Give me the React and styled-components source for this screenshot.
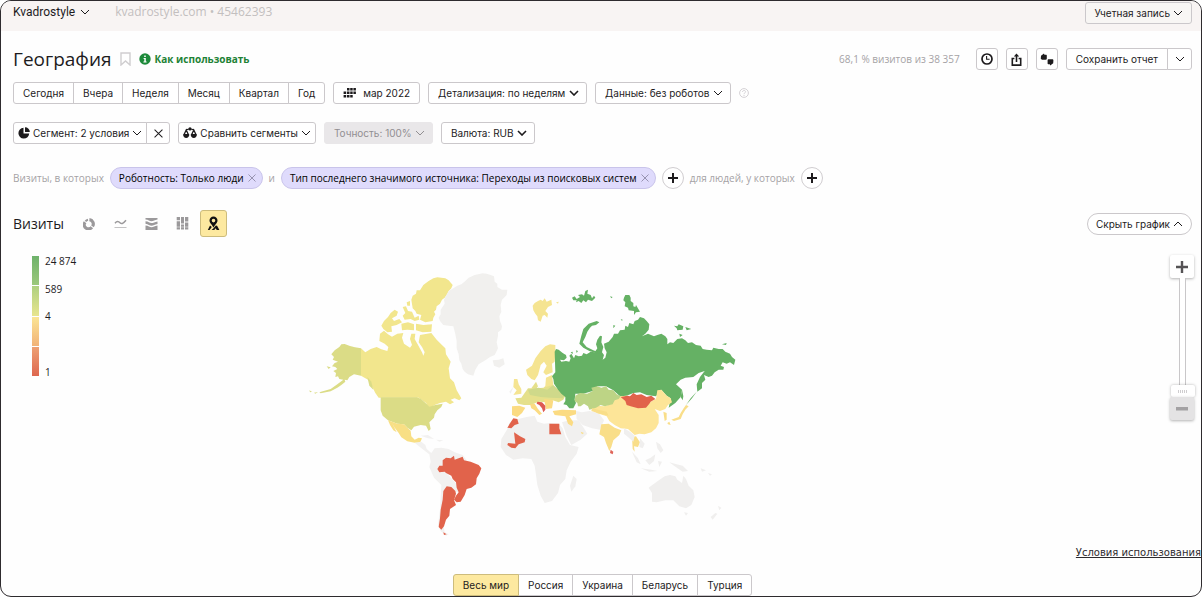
import React, { useState } from "react";
import styled, { createGlobalStyle, css } from "styled-components";

const periods = ["Сегодня", "Вчера", "Неделя", "Месяц", "Квартал", "Год"];

const regions = ["Весь мир", "Россия", "Украина", "Беларусь", "Турция"];

const GlobalStyle = createGlobalStyle`
  * {
    box-sizing: border-box;
  }

  body {
    margin: 0;
    background: #fff;
  }

  button,
  select,
  input {
    margin: 0;
    font: inherit;
    color: inherit;
  }

  svg {
    flex-shrink: 0;
  }
`;

const Page = styled.div`
  min-height: 100vh;
  border: 1px solid #2e2b2e;
  border-radius: 11px;
  overflow: hidden;
  background: #fefefe;
  color: #1d1b1d;
  font-family: Inter, Arial, sans-serif;
  font-size: 10px;
  line-height: 14px;
  white-space: nowrap;
`;

const Header = styled.header`
  display: flex;
  align-items: flex-start;
  height: 30px;
  padding: 1px 9px 0 12px;
  background: #f8f4f3;
`;

const controlBox = css`
  height: 22px;
  border: 1px solid #cbc8cb;
  border-radius: 3px;
  background: #fff;
`;

const CounterButton = styled.button`
  display: flex;
  align-items: center;
  gap: 5px;
  height: 20px;
  padding: 0;
  border: 0;
  background: none;
  font-family: Roboto, sans-serif;
  font-size: 12px;
`;

const CounterInfo = styled.span`
  margin-left: 25px;
  color: #c3bfbf;
  font-family: "Open Sans", sans-serif;
  font-size: 12px;
  line-height: 20px;
`;

const Button = styled.button`
  ${controlBox}
  display: flex;
  align-items: center;
  justify-content: center;
  gap: ${(props) => props.$gap || 3}px;
  padding: 0 ${(props) => (props.$tight ? 4 : 9)}px;
  ${(props) => props.$width && `width: ${props.$width}px; padding: 0;`}
  ${(props) => props.$round && "border-radius: 11px;"}
  ${(props) => props.$push && "margin-left: auto; padding: 0 8px;"}
`;

const AccountButton = styled(Button)`
  background: #f8f6f4;
`;

const Main = styled.main`
  padding: 16px 9px 0 12px;
`;

const TitleRow = styled.div`
  display: flex;
  align-items: center;
  height: 24px;
`;

const Title = styled.h1`
  margin: 0 8px 0 0;
  font-family: "Open Sans", sans-serif;
  font-size: 19px;
  font-weight: 400;
  line-height: 24px;
`;

const HelpLink = styled.a`
  display: flex;
  align-items: center;
  gap: 4px;
  margin-left: 8px;
  color: #1d8235;
  font-family: "Open Sans", sans-serif;
  font-weight: 700;
  text-decoration: none;
`;

const Tools = styled.div`
  display: flex;
  align-items: center;
  gap: 8px;
  margin-left: auto;
`;

const VisitShare = styled.span`
  margin-right: 8px;
  color: #a5a2a5;
  font-family: "Open Sans", sans-serif;
`;

const Row = styled.div`
  display: flex;
  align-items: center;
  gap: ${(props) => props.$gap || 8}px;
  margin-top: ${(props) => props.$top}px;
`;

const Group = styled.div`
  display: flex;

  button + button {
    margin-left: -1px;
  }

  button:not(:first-child) {
    border-top-left-radius: 0;
    border-bottom-left-radius: 0;
  }

  button:not(:last-child) {
    border-top-right-radius: 0;
    border-bottom-right-radius: 0;
  }
`;

const SelectBox = styled.label`
  ${controlBox}
  display: flex;
  align-items: center;
  gap: 3px;
  padding: 0 7px 0 9px;

  select {
    appearance: none;
    padding: 0;
    border: 0;
    background: none;
    opacity: 1;
  }

  ${(props) =>
    props.$disabled &&
    css`
      border-color: #e9e7e9;
      background: #e9e7e9;
      color: #918e91;
    `}
`;

const Muted = styled.span`
  color: #a5a2a5;
  font-family: "Open Sans", sans-serif;
`;

const Condition = styled.div`
  display: flex;
  align-items: center;
  gap: 4px;
  height: 22px;
  padding: 0 6px 0 8px;
  border: 1px solid #c9c4ea;
  border-radius: 11px;
  background: #dfdbfc;
  color: #000;
  font-family: "Open Sans", sans-serif;

  button {
    display: flex;
    padding: 0;
    border: 0;
    background: none;
    color: #8f8aa8;
  }
`;

const RoundButton = styled.button`
  display: flex;
  align-items: center;
  justify-content: center;
  width: 22px;
  height: 22px;
  padding: 0;
  border: 1px solid #d0cdd0;
  border-radius: 50%;
  background: #fff;
`;

const ChartTitle = styled.h2`
  margin: 0 8px 0 0;
  font-family: "Open Sans", sans-serif;
  font-size: 14px;
  font-weight: 500;
  line-height: 20px;
`;

const ChartType = styled.button`
  display: flex;
  align-items: center;
  justify-content: center;
  width: 27px;
  height: 27px;
  padding: 0;
  border: 1px solid ${(props) => (props.$active ? "#cdbc7c" : "transparent")};
  border-radius: 3px;
  background: ${(props) => (props.$active ? "#fde9a0" : "none")};
  color: ${(props) => (props.$active ? "#111" : "#9b999b")};
`;

const MapArea = styled.section`
  display: grid;
  grid-template-columns: 25% 1fr auto;
  align-items: start;
  margin: 18px -2px 0 0;
`;

const Legend = styled.div`
  display: flex;
  gap: 6px;
  height: 120px;
  margin: 1px 0 0 19px;
`;

const Scale = styled.div`
  display: grid;
  grid-template-rows: repeat(4, 1fr);
  gap: 1px;
  width: 7px;
`;

const ScaleStep = styled.span`
  background: linear-gradient(${(props) => props.$from}, ${(props) => props.$to});
`;

const ScaleLabels = styled.div`
  display: grid;
  grid-template-rows: 28px 27px 56px 14px;
  font-family: "Open Sans", sans-serif;
  line-height: 10px;
`;

const MapSvg = styled.svg`
  width: 450px;
  height: 280px;
  margin: 10px 0 1px -8px;
`;

const Zoom = styled.div`
  display: flex;
  flex-direction: column;
  align-items: center;
  width: 24px;
`;

const ZoomButton = styled.button`
  display: flex;
  align-items: center;
  justify-content: center;
  width: 24px;
  height: 23px;
  padding: 0;
  border: 0;
  border-radius: 2px;
  background: ${(props) => (props.disabled ? "#e4e3e4" : "#fff")};
  color: ${(props) => (props.disabled ? "#a3a1a3" : "#555355")};
  box-shadow: 0 1px 3px rgba(0, 0, 0, 0.3);
`;

const ZoomSlider = styled.input`
  appearance: none;
  writing-mode: vertical-lr;
  direction: rtl;
  width: 24px;
  height: 119px;
  background: none;

  &::-webkit-slider-runnable-track {
    width: 7px;
    height: 119px;
    margin: 0 auto;
    border: 1px solid #c9c7c9;
    border-width: 0 1px;
    background: #fff;
  }

  &::-webkit-slider-thumb {
    appearance: none;
    width: 24px;
    height: 12px;
    margin-left: -9px;
    border-radius: 2px;
    background: repeating-linear-gradient(90deg, #cfcdcf 0 1px, transparent 1px 2px) center / 9px 3px no-repeat, #fff;
    box-shadow: 0 0 3px rgba(0, 0, 0, 0.3);
  }
`;

const Terms = styled.a`
  display: block;
  width: fit-content;
  margin: 0 -9px 0 auto;
  color: #2d2a2d;
  font-family: "DejaVu Sans", Verdana, sans-serif;
  line-height: 14px;
  text-decoration: underline;
`;

const RegionRow = styled.nav`
  display: flex;
  justify-content: center;
  margin-top: 14px;
`;

const RegionButton = styled(Button)`
  ${(props) => props.$active && "position: relative; border-color: #cdbc7c; background: #fde9a0;"}
`;

const Chevron = ({ up, bold }) => (
  <svg width="10" height="6" viewBox="0 0 10 6" fill="none" stroke="currentColor" strokeWidth={bold ? 1.6 : 1}>
    <path d={up ? "M1 5 5 1 9 5" : "M1 1 5 5 9 1"} />
  </svg>
);

const Cross = ({ size = 8 }) => (
  <svg width={size} height={size} viewBox="0 0 8 8" stroke="currentColor" strokeWidth="0.9">
    <path d="M.5.5l7 7M7.5.5l-7 7" />
  </svg>
);

const Plus = ({ size = 10 }) => (
  <svg width={size} height={size} viewBox="0 0 10 10" stroke="currentColor" strokeWidth="2">
    <path d="M5 0v10M0 5h10" />
  </svg>
);

const BookmarkIcon = () => (
  <svg width="11" height="14" viewBox="0 0 11 14" fill="none" stroke="#cfcdcf" strokeWidth="1.4">
    <path d="M1 1h9v12L5.500 9 1 13z" />
  </svg>
);

const InfoIcon = () => (
  <svg width="12" height="12" viewBox="0 0 12 12">
    <circle cx="6" cy="6" r="5.700" fill="#1d8a3a" />
    <path d="M5.200 2.500h1.600v1.500H5.200zM4.600 5h2.200v3.400h.8v1H4.400v-1h.9V6h-.7z" fill="#fff" />
  </svg>
);

const ClockIcon = () => (
  <svg width="12" height="12" viewBox="0 0 12 12" fill="none" stroke="currentColor">
    <circle cx="6" cy="6" r="5" strokeWidth="1.700" />
    <path d="M5.600 3v3.300h3" strokeWidth="1.100" />
  </svg>
);

const ShareIcon = () => (
  <svg width="11" height="13" viewBox="0 0 11 13" fill="none" stroke="currentColor" strokeWidth="1.600">
    <path d="M3.400 5.500H1.300v6.600h8.400V5.500H7.600M5.500 9V2" />
    <path d="M2.800 3.600 5.500.4l2.700 3.200z" fill="currentColor" stroke="none" />
  </svg>
);

const CommentsIcon = () => (
  <svg width="14" height="13" viewBox="0 0 14 13" fill="currentColor">
    <path d="M1 2.800 4 .4l.4 1.400h1.400c.8 0 1 .4 1 1v2.800c0 .8-.4 1.200-1.200 1.200H2C1.200 6.800.8 6.400.8 5.600z" />
    <path d="M13.200 10.200 10.200 12.600 9.800 11.200H8.600c-.8 0-1-.4-1-1V7.400c0-.8.4-1.200 1.200-1.200h3.400c.8 0 1.200.4 1.200 1.200z" />
  </svg>
);

const CalendarIcon = () => (
  <svg width="13" height="10" viewBox="0 0 13 10" fill="currentColor">
    <path d="M4 0h2.500v2.500H4zM7.200 0h2.500v2.500H7.200zM10.400 0h2.500v2.500h-2.500zM.6 3.500h2.600V6H.6zM4 3.500h2.500V6H4zM7.200 3.500h2.500V6H7.200zM10.400 3.500h2.500V6h-2.500zM.6 7h2.600v2.500H.6zM4 7h2.500v2.500H4zM7.200 7h2.500v2.500H7.200z" />
  </svg>
);

const PieIcon = () => (
  <svg width="12" height="12" viewBox="0 0 12 12" fill="currentColor">
    <path d="M5.500.8v5.700h5.700A5.400 5.400 0 1 1 5.500.8z" />
    <path d="M7 .2a4.800 4.800 0 0 1 4.800 4.900H7z" />
  </svg>
);

const ScalesIcon = () => (
  <svg width="14" height="12" viewBox="0 0 14 12" fill="none" stroke="currentColor" strokeWidth="1.300">
    <path d="M3.200 3 1 7.600h4.400zM10.800 3 8.600 7.600H13zM3.200 3l2.600-1M10.800 3 8.200 2" />
    <circle cx="7" cy="1.900" r="1.600" fill="currentColor" stroke="none" />
    <path d="M.2 7.400h6c0 2-1.200 3.600-3 3.600s-3-1.600-3-3.600zM7.800 7.400h6c0 2-1.200 3.600-3 3.600s-3-1.600-3-3.600z" fill="currentColor" stroke="none" />
  </svg>
);

const HintIcon = () => (
  <svg width="10" height="10" viewBox="0 0 10 10" fill="none" stroke="#cfccd0" strokeWidth="0.900">
    <circle cx="5" cy="5" r="4.400" />
    <path d="M3.500 4c0-2 3-2 3-.2C6.500 5 5 4.800 5 6.200M5 7v1" />
  </svg>
);

const DonutIcon = () => (
  <svg width="12" height="12" viewBox="0 0 12 12" fill="none" stroke="currentColor" strokeWidth="3.200">
    <path d="M6.400 1.700a4.200 4.200 0 0 1 3.100 6.600" />
    <path d="M8.800 9.300A4.200 4.200 0 0 1 2.100 4.200" />
    <path d="M2.500 3.400a4.200 4.200 0 0 1 2.500-1.600" strokeWidth="2" />
  </svg>
);

const LinesIcon = () => (
  <svg width="13" height="11" viewBox="0 0 13 11" fill="none" stroke="currentColor">
    <path d="M1 5.200c2-2.400 3.600-1.800 5-.4s2.800 1.200 6-2.600" strokeWidth="1.500" />
    <path d="M.5 9.500h12" strokeWidth="1" opacity=".6" />
  </svg>
);

const AreasIcon = () => (
  <svg width="13" height="12" viewBox="0 0 13 12" fill="currentColor">
    <path d="M.5 0h12v1.400c-3 .4-4 1.800-6 1.800S3.500 1.800.5 1.600z" />
    <path d="M.5 3.200c3 .2 4 1.800 6 1.800s3-1.200 6-1.600v2.700c-3 .4-4 1.600-6 1.600S3.500 6.100.5 5.700z" />
    <path d="M.5 7.400c3 .2 4 1.800 6 1.800s3-1.200 6-1.600V12H.5z" />
  </svg>
);

const ColumnsIcon = () => (
  <svg width="13" height="13" viewBox="0 0 13 13" fill="currentColor">
    <path d="M.7 0h3.300v3.200H.7zM5 0h3v6.400H5zM9 0h3.300v4.500H9zM.7 4.200h3.300v5.500H.7zM5 7.400h3v2.300H5zM9 5.500h3.300v4.200H9zM.7 10.200h3.300v2.300H.7zM5 10.200h3v2.300H5zM9 10.200h3.300v2.300H9z" />
  </svg>
);

const PinMapIcon = () => (
  <svg width="13" height="15" viewBox="0 0 13 15" fill="currentColor">
    <path
      fillRule="evenodd"
      d="M6.500.5a4 4 0 0 1 4 4.100c0 2.200-1.800 3.200-4 6.900-2.200-3.700-4-4.700-4-6.900a4 4 0 0 1 4-4.100zm0 2.300a1.800 1.800 0 1 0 0 3.600 1.800 1.800 0 0 0 0-3.600z"
    />
    <path d="M3 9.500 4.800 11 2.600 14H.8zM6.300 12.500 8.800 9.500l1.300.2L12.400 14H9.700l-1-1.800L7.200 14H4.500z" />
  </svg>
);

const charts = [
  { id: "pie", label: "Круговая диаграмма", icon: <DonutIcon /> },
  { id: "lines", label: "Линии", icon: <LinesIcon /> },
  { id: "areas", label: "Области", icon: <AreasIcon /> },
  { id: "columns", label: "Колонки", icon: <ColumnsIcon /> },
  { id: "map", label: "Карта", icon: <PinMapIcon /> },
];

const WorldMap = () => (
  <MapSvg viewBox="0 0 1350 840" role="img" aria-label="Карта визитов">
    {/* North America and Greenland */}
    <g fill="#f2e68d">
      <path d="M183 250 196 262 212 252 230 246 244 253 262 258 265 246 254 236 238 228 240 206 252 197 264 208 276 215 292 206 310 204 306 218 312 236 330 248 336 240 330 222 334 206 346 206 344 222 352 236 366 262 370 272 374 262 366 246 356 232 360 210 394 204 410 224 422 236 436 250 438 268 452 290 446 310 450 340 462 352 470 376 484 400 478 406 464 400 452 404 462 412 450 418 438 410 420 414 404 420 388 430 378 414 356 398 236 398 226 384 214 360 204 344 183 332Z" />
      <path d="M400 40 412 37 424 38 436 40 446 46 458 60 454 70 446 78 440 90 434 98 426 104 420 116 410 124 408 134 402 140 406 148 400 158 398 168 376 172 360 164 364 150 350 146 346 138 338 130 334 104 338 92 348 86 350 76 360 76 370 60 386 48Z" />
      <path d="M348 176 370 180 396 178 394 200 368 202 348 196Z" />
      <path d="M308 126 318 124 324 138 336 140 344 158 356 152 358 164 344 168 332 162 314 164 308 152 316 144Z" />
      <path d="M284 134 294 140 290 152 276 160 282 168 298 162 306 172 290 180 274 184 276 200 262 202 250 192 244 182 252 168 264 156 272 144Z" />
      <path d="M304 176 324 172 342 178 342 196 322 194 306 196Z" />
      <path d="M320 112 330 108 330 122 322 122Z" />
    </g>
    <g fill="#dbdc86">
      <path d="M134 237 150 243 165 247 183 250V332L162 328 148 336 142 346 134 344 136 350 124 360 112 368 92 379 62 385 58 382 92 372 112 358 130 344 118 342 114 334 106 336 108 324 100 318 112 312 106 306 96 304 104 294 114 290 98 284 102 276 94 268 104 256 118 246 124 238Z" />
      <path d="M80 304 92 307 86 312ZM28 376 36 380 30 382ZM42 383 54 381 46 386Z" />
      <path d="M202 336 214 350 220 374 208 362Z" />
      <path d="M242 397H350L362 401 380 417 388 425 406 420 428 416 424 426 412 436 404 448 402 458 388 472 392 492 386 498 378 482 362 480 342 485 334 496 322 488 312 478 292 476 264 466 248 452 242 436Z" />
    </g>
    <path
      fill="#f8df85"
      d="M264 466 292 476 312 478 322 488 332 497 334 514 344 524 356 518 366 520 360 533 344 533 322 529 304 517 296 504 284 488 276 474 290 502 280 496 270 480Z"
    />
    <path
      fill="#f1f0ee"
      d="M548 25 560 26 572 30 582 34 584 50 592 56 592 66 606 74 622 74 620 90 606 104 602 120 604 140 598 154 600 168 606 184 604 194 594 202 594 212 590 232 594 250 584 270 570 276 556 286 536 298 526 314 520 332 504 328 494 320 488 312 484 296 478 286 476 268 470 250 470 228 466 208 460 184 446 182 430 180 420 168 416 158 422 148 422 134 434 116 432 104 438 92 446 78 460 70 472 62 484 58 496 48 506 38 524 30ZM578 286 596 284 610 280 614 298 598 308 582 302Z"
    />
    {/* South America */}
    <g fill="#f2f1f0">
      <path d="M344 533 364 530 376 540 380 552 394 564 404 550 424 548 446 552 464 562 488 570 500 586 470 600 434 580 436 620 458 644 478 666 480 684 440 670 436 700 432 740 430 780 434 802 446 808 438 812 422 798 414 780 420 734 422 698 424 660 402 638 388 606 392 590 388 568 372 556Z" />
      <path d="M362 512 384 510 402 522 384 520ZM408 524 430 526 418 530Z" />
    </g>
    <g fill="#e1634b">
      <path d="M428 586 438 578 452 580 462 572 464 584 480 578 488 575 492 586 512 590 536 600 544 610 538 626 530 640 528 658 514 668 500 672 494 690 482 710 470 712 462 704 468 692 476 682 470 668 468 652 458 642 454 632 438 624 434 620 418 622 412 612 418 602 428 602Z" />
      <path d="M440 664 454 666 466 678 468 686 462 706 468 720 450 732 448 752 438 764 432 784 424 794 416 786 420 760 422 734 428 704 430 678ZM430 802 440 808 432 810Z" />
    </g>
    {/* Africa and Middle East */}
    <g fill="#f1f0ef">
      <path d="M654 462 680 456 704 452 712 470 732 476 750 474 776 476 788 490 796 516 810 540 836 546 830 566 812 590 800 616 796 642 780 660 774 684 756 708 734 714 722 692 712 660 708 630 704 602 694 582 668 580 640 584 618 570 602 546 604 522 622 492 628 474Z" />
      <path d="M820 632 830 642 826 664 814 680 810 662Z" />
      <path d="M786 472 806 466 836 466 852 490 862 506 842 524 814 540 800 512Z" />
      <path d="M828 438 846 442 868 438 896 444 912 466 900 494 876 490 848 480 830 462Z" />
      <path d="M640 366 632 386 628 380Z" />
    </g>
    <g fill="#e1634b">
      <path d="M640 460 652 462 656 476 644 480 634 490 622 488 632 472Z" />
      <path d="M642 502 660 514 676 522 674 532 656 538 646 550 634 548 622 540 624 534 646 536Z" />
      <path d="M748 476 778 476 778 490 784 508 748 508Z" />
    </g>
    {/* Europe */}
    <g fill="#f5e491">
      <path d="M704 114 714 108 722 104 728 108 734 100 740 110 754 104 756 120 744 126 736 138 744 146 742 158 734 150 728 152 722 170 714 166 712 154 706 146 700 136 698 122ZM768 112 776 110 774 116Z" />
      <path d="M750 238 766 240 766 262 764 290 756 296 758 322 738 330 730 322 740 302 732 290 722 300 714 330 704 346 694 342 682 330 678 314 696 302 706 280 722 258 736 244Z" />
      <path d="M642 342 652 342 656 358 664 372 664 386 640 390 650 376 640 366Z" />
      <path d="M738 338 756 330 760 360 744 370 724 378 736 362Z" />
    </g>
    <g fill="#e5e08b">
      <path d="M684 370 710 370 730 368 758 360 778 376 796 392 790 404 776 412 758 406 740 412 720 410 706 414 694 420 672 420 654 416 646 400 664 398 674 384Z" />
      <path d="M694 370 708 350 714 364 706 376Z" />
    </g>
    <path fill="#cfd98a" d="M684 374 716 368 742 374 760 360 774 376 796 390 788 400 752 398 722 396 690 390Z" />
    <g fill="#fbdb82">
      <path d="M636 424 658 422 676 428 666 444 652 456 636 450Z" />
      <path d="M690 418 704 416 714 432 726 446 718 450 704 436 694 430Z" />
      <path d="M732 402 760 406 756 430 738 432Z" />
      <path d="M758 438 786 434 828 436 828 448 808 454 820 472 816 484 804 476 796 454 764 450Z" />
    </g>
    <path fill="#de5a52" d="M712 410 726 412 736 422 736 434 730 442 726 430 718 420 710 416Z" />
    {/* Asia */}
    <path
      fill="#65b164"
      d="M764 260 768 252 776 254 788 264 798 270 800 278 792 286 780 284 784 290 798 288 808 290 812 280 808 272 814 266 822 280 826 270 836 274 846 272 850 264 860 268 872 260 884 262 892 250 888 238 892 224 900 212 906 214 904 232 910 246 906 262 912 270 908 284 916 278 920 262 914 250 912 236 926 230 938 216 942 206 954 206 960 196 974 194 976 182 984 186 988 174 1000 178 1004 168 1014 164 1020 156 1032 160 1040 168 1048 178 1046 194 1036 206 1026 214 1044 206 1062 214 1072 210 1084 206 1096 214 1102 222 1102 238 1110 232 1120 234 1132 222 1146 220 1156 226 1164 234 1176 232 1188 240 1202 242 1208 252 1220 254 1236 256 1240 248 1256 252 1268 252 1276 260 1290 266 1296 276 1306 284 1302 300 1290 292 1280 296 1268 292 1262 302 1272 306 1270 314 1256 314 1244 322 1236 332 1226 336 1212 330 1216 344 1206 354 1206 370 1192 380 1190 358 1200 336 1214 318 1196 324 1180 336 1156 338 1142 344 1128 358 1146 374 1142 396 1126 414 1106 428 1112 400 1100 392 1084 374 1068 394 1040 390 1020 382 1000 384 980 392 960 394 940 376 918 364 892 364 878 378 850 386 826 386 824 404 828 414 820 430 808 430 800 420 790 418 796 408 796 396 784 386 774 374 762 356 760 342 756 334 766 322Z"
    />
    <g fill="#65b164">
      <path d="M890 168 898 172 888 180 876 182 870 188 862 200 856 216 848 232 860 246 880 256 900 264 896 266 868 258 850 248 838 236 844 212 850 192 866 176Z" />
      <path d="M816 98 824 94 830 102 840 96 834 90 846 88 852 92 856 78 864 74 862 86 872 90 876 100 882 92 886 98 876 108 864 104 858 112 850 106 844 114 836 108 828 112 830 106 820 106Z" />
      <path d="M976 90 988 90 992 98 992 108 1000 114 1000 124 1006 126 1008 120 1020 140 1008 142 1002 150 1002 138 986 136 984 128 974 124 976 112 970 106 972 98Z" />
      <path d="M1122 182 1132 184 1136 178 1150 184 1148 194 1132 196 1130 190ZM1156 186 1174 192 1160 196ZM1138 206 1148 210 1140 216ZM1266 238 1280 234 1278 240ZM940 180 946 182 940 190ZM930 94 938 96 934 100ZM962 162 968 164 966 168Z" />
      <path d="M1146 374 1150 394 1148 406 1142 396ZM1190 380 1176 400 1158 420 1172 400Z" />
      <path d="M812 262 818 260 818 268ZM828 256 834 258 830 264Z" />
    </g>
    <path
      fill="#fde598"
      d="M960 394 982 392 990 404 1010 416 1040 420 1056 408 1068 402 1072 376 1084 374 1100 392 1112 400 1116 412 1104 420 1096 432 1080 438 1064 432 1076 450 1076 474 1068 490 1054 502 1034 508 1018 506 1004 510 984 492 962 490 944 480 928 468 920 454 890 444 876 430 884 422 914 424 936 416 944 402Z"
    />
    <path
      fill="#bdd485"
      d="M826 392 840 384 862 386 878 378 874 368 892 364 904 368 918 364 926 374 940 376 950 388 962 394 956 402 944 406 938 418 914 424 902 420 888 428 868 434 864 424 852 416 842 424 834 424 832 414 824 408Z"
    />
    <path fill="#e1634b" d="M962 396 982 392 990 394 1000 384 1010 390 1024 388 1040 396 1054 392 1066 402 1052 410 1048 416 1038 428 1014 430 992 424 980 420 976 408Z" />
    <g fill="#f9de89">
      <path d="M904 478 926 476 944 488 964 496 958 510 940 526 934 546 928 558 918 534 912 516 898 508Z" />
      <path d="M1090 440 1100 444 1100 464 1094 468ZM1102 474 1108 470 1112 480 1104 478ZM1114 464 1136 456 1142 444 1152 428 1158 420 1166 424 1156 434 1148 448 1142 462 1122 468Z" />
      <path d="M996 516 1008 514 1020 532 1014 546 1002 544 1004 560 998 552Z" />
      <path d="M876 430 920 440 926 452 900 446 874 438ZM842 500 852 504 846 508Z" />
    </g>
    <path fill="#df6458" d="M932 554 940 560 938 568 930 564Z" />
    {/* South-East Asia and Oceania */}
    <g fill="#f0efee">
      <path d="M1110 630 1126 634 1132 644 1146 654 1150 632 1158 642 1166 662 1180 676 1184 696 1174 720 1158 730 1138 724 1120 706 1096 706 1070 712 1056 710 1056 684 1046 668 1062 656 1082 642 1094 634Z" />
      <path d="M1108 592 1130 598 1148 602 1164 618 1148 620 1124 604ZM1152 742 1164 744 1158 752ZM1254 722 1264 728 1258 736ZM1232 756 1246 744 1252 746 1238 764Z" />
      <path d="M972 490 990 500 1004 512 1000 530 988 520 972 506Z" />
      <path d="M996 560 1014 580 1022 598 1010 592ZM1022 610 1054 614 1072 618 1048 620ZM1036 586 1052 578 1066 568 1062 588 1048 600ZM1068 530 1080 538 1090 556 1082 564 1072 550ZM1074 588 1086 590 1078 606ZM1202 610 1218 616 1206 620ZM1224 624 1236 628 1230 632Z" />
      <path d="M1020 520 1034 536 1028 550 1018 546Z" />
    </g>
  </MapSvg>
);

const Dropdown = ({ label, value, bold, disabled }) => (
  <SelectBox $disabled={disabled}>
    <select aria-label={label} disabled={disabled} defaultValue={value}>
      <option value={value}>{`${label}: ${value}`}</option>
    </select>
    <Chevron bold={bold} />
  </SelectBox>
);

const App = () => {
  const [chart, setChart] = useState("map");
  const [region, setRegion] = useState(regions[0]);
  const [zoom, setZoom] = useState(0);

  return (
    <>
      <GlobalStyle />
      <Page>
        <Header>
          <CounterButton>
            Kvadrostyle
            <Chevron />
          </CounterButton>
          <CounterInfo>kvadrostyle.com • 45462393</CounterInfo>
          <AccountButton $push>
            Учетная запись
            <Chevron />
          </AccountButton>
        </Header>
        <Main>
          <TitleRow>
            <Title>География</Title>
            <BookmarkIcon />
            <HelpLink href="#help">
              <InfoIcon />
              Как использовать
            </HelpLink>
            <Tools>
              <VisitShare>68,1 % визитов из 38 357</VisitShare>
              <Button $width={22} aria-label="История">
                <ClockIcon />
              </Button>
              <Button $width={22} aria-label="Экспорт">
                <ShareIcon />
              </Button>
              <Button $width={22} aria-label="Комментарии">
                <CommentsIcon />
              </Button>
              <Group>
                <Button>Сохранить отчет</Button>
                <Button $width={25} aria-label="Ещё">
                  <Chevron />
                </Button>
              </Group>
            </Tools>
          </TitleRow>

          <Row $top={11}>
            <Group>
              {periods.map((period) => (
                <Button key={period}>{period}</Button>
              ))}
            </Group>
            <Button $gap={7}>
              <CalendarIcon />
              мар 2022
            </Button>
            <Dropdown label="Детализация" value="по неделям" bold />
            <Dropdown label="Данные" value="без роботов" />
            <HintIcon />
          </Row>

          <Row $top={18}>
            <Group>
              <Button $tight>
                <PieIcon />
                Сегмент: 2 условия
                <Chevron />
              </Button>
              <Button $width={24} aria-label="Сбросить сегмент">
                <Cross size={9} />
              </Button>
            </Group>
            <Button $tight>
              <ScalesIcon />
              Сравнить сегменты
              <Chevron />
            </Button>
            <Dropdown label="Точность" value="100%" disabled />
            <Dropdown label="Валюта" value="RUB" bold />
          </Row>

          <Row $top={23} $gap={6}>
            <Muted>Визиты, в которых</Muted>
            <Condition>
              Роботность: Только люди
              <button aria-label="Удалить">
                <Cross />
              </button>
            </Condition>
            <Muted>и</Muted>
            <Condition>
              Тип последнего значимого источника: Переходы из поисковых систем
              <button aria-label="Удалить">
                <Cross />
              </button>
            </Condition>
            <RoundButton aria-label="Добавить условие">
              <Plus />
            </RoundButton>
            <Muted>для людей, у которых</Muted>
            <RoundButton aria-label="Добавить условие для людей">
              <Plus />
            </RoundButton>
          </Row>

          <Row $top={21} $gap={4}>
            <ChartTitle>Визиты</ChartTitle>
            {charts.map((item) => (
              <ChartType
                key={item.id}
                aria-label={item.label}
                $active={item.id === chart}
                onClick={() => setChart(item.id)}
              >
                {item.icon}
              </ChartType>
            ))}
            <Button $round $push>
              Скрыть график
              <Chevron up />
            </Button>
          </Row>

          <MapArea>
            <Legend>
              <Scale>
                <ScaleStep $from="#6fb26b" $to="#9bc87b" />
                <ScaleStep $from="#aed080" $to="#e8e58d" />
                <ScaleStep $from="#fbe594" $to="#f1b277" />
                <ScaleStep $from="#eda073" $to="#de674f" />
              </Scale>
              <ScaleLabels>
                <span>24 874</span>
                <span>589</span>
                <span>4</span>
                <span>1</span>
              </ScaleLabels>
            </Legend>
            <WorldMap />
            <Zoom>
              <ZoomButton aria-label="Приблизить" onClick={() => setZoom(Math.min(zoom + 1, 10))}>
                <Plus size={12} />
              </ZoomButton>
              <ZoomSlider
                type="range"
                aria-label="Масштаб"
                min="0"
                max="10"
                value={zoom}
                onChange={(e) => setZoom(Number(e.target.value))}
              />
              <ZoomButton aria-label="Отдалить" disabled={zoom === 0} onClick={() => setZoom(zoom - 1)}>
                <svg width="12" height="4" viewBox="0 0 12 4" fill="currentColor">
                  <path d="M0 0h12v3.500H0z" />
                </svg>
              </ZoomButton>
            </Zoom>
          </MapArea>

          <Terms href="#terms">Условия использования</Terms>

          <RegionRow>
            <Group>
              {regions.map((name) => (
                <RegionButton key={name} $active={name === region} onClick={() => setRegion(name)}>
                  {name}
                </RegionButton>
              ))}
            </Group>
          </RegionRow>
        </Main>
      </Page>
    </>
  );
};

export default App;
